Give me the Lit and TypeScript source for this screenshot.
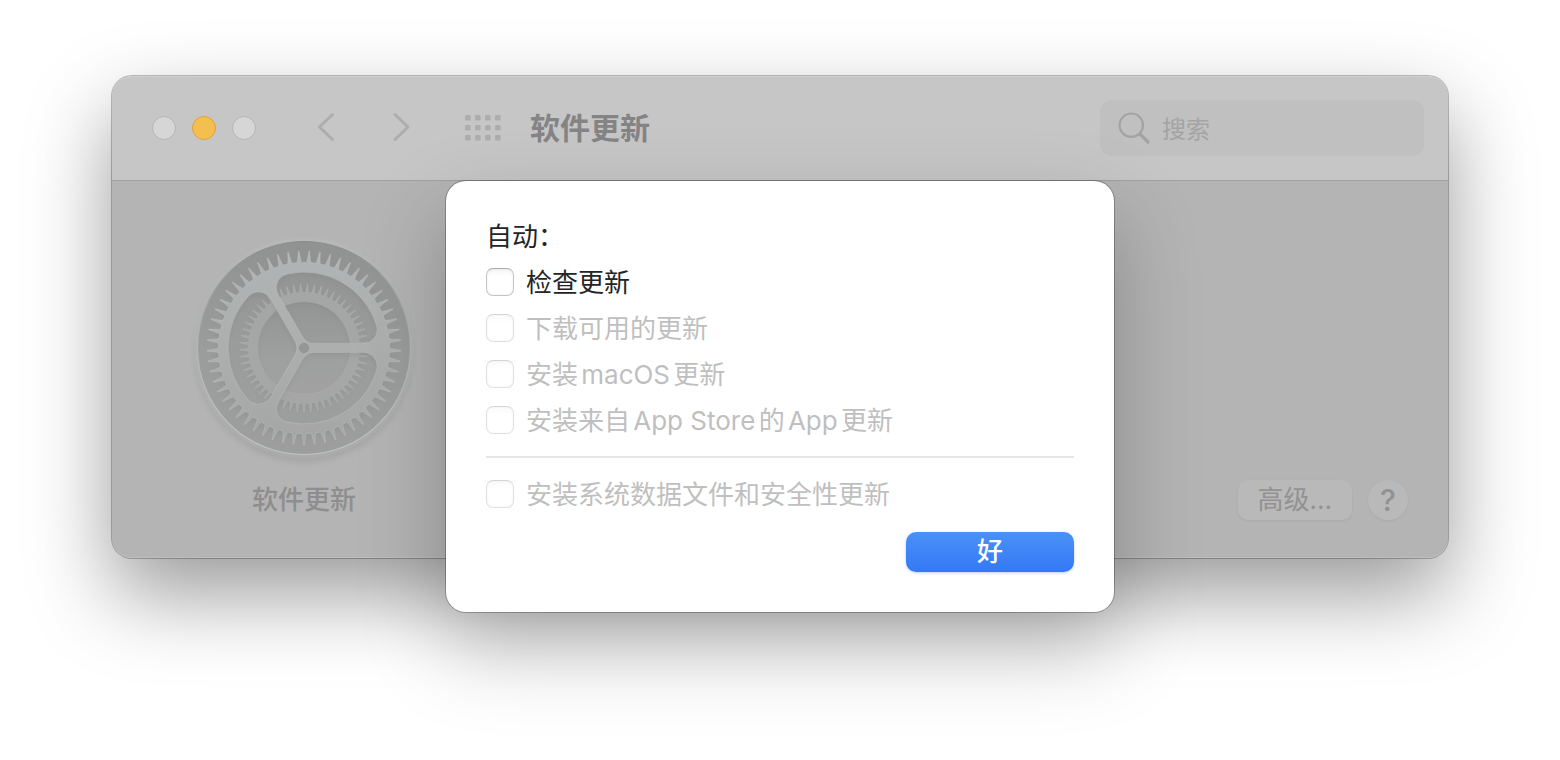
import { LitElement, html, svg, css } from "lit";
import { customElement, property, state } from "lit/decorators.js";
import { classMap } from "lit/directives/class-map.js";

type Point = [number, number];

const polar = (r: number, a: number): Point => [r * Math.cos(a), r * Math.sin(a)];
const fmt = ([x, y]: Point) => `${x.toFixed(2)} ${y.toFixed(2)}`;

/** Outline of a toothed ring: pointed teeth, round-bottomed gaps. */
function teethPath(count: number, root: number, tip: number, base: number, point: number): string {
  const pitch = (2 * Math.PI) / count;
  const parts: string[] = [];
  for (let i = 0; i < count; i++) {
    const a = -Math.PI / 2 + (i + 0.5) * pitch;
    const b = base / root;
    const lowLeft = fmt(polar(root, a - b));
    const lowRight = fmt(polar(root, a + b));
    const curveLeft = fmt(polar(root + 1, a - b * 0.62));
    const curveRight = fmt(polar(root + 1, a + b * 0.62));
    const tipLeft = fmt(polar(tip, a - point / tip));
    const tipRight = fmt(polar(tip, a + point / tip));
    parts.push(
      `${i === 0 ? "M" : "L"}${lowLeft} Q${curveLeft} ${tipLeft} L${tipRight} Q${curveRight} ${lowRight}`,
    );
  }
  return parts.join(" ") + " Z";
}

const circlePath = (r: number) => `M${-r} 0 a${r} ${r} 0 1 0 ${2 * r} 0 a${r} ${r} 0 1 0 ${-2 * r} 0 Z`;

/** Opening between two spokes 120 degrees apart, with rounded corners. */
function openingPath(R: number, half: number, outer: number, inner: number, turn: number): string {
  const deg = Math.PI / 180;
  const reach = R - outer;
  const off = half + outer;
  const along = Math.sqrt(reach * reach - off * off);
  const arcAngle = Math.atan2(off, along);
  const innerAlong = (half + inner) / Math.tan(60 * deg);
  const rot = ([x, y]: Point, a: number): Point => [
    x * Math.cos(a) - y * Math.sin(a),
    x * Math.sin(a) + y * Math.cos(a),
  ];
  const mirror = ([x, y]: Point): Point => rot([x, -y], 120 * deg);
  const at = (p: Point) => fmt(rot(p, turn * deg));
  const a: Point = [innerAlong, half];
  const b: Point = [along, half];
  const c: Point = polar(R, arcAngle);
  return [
    `M${at(a)}`,
    `L${at(b)}`,
    `A${outer} ${outer} 0 0 1 ${at(c)}`,
    `A${R} ${R} 0 0 1 ${at(mirror(c))}`,
    `A${outer} ${outer} 0 0 1 ${at(mirror(b))}`,
    `L${at(mirror(a))}`,
    `A${inner} ${inner} 0 0 1 ${at(a)}`,
    "Z",
  ].join(" ");
}

const OUTER_GEAR =
  teethPath(57, 85.5, 97, 2.4, 0.3) +
  [0, 120, 240].map((t) => openingPath(76, 4.3, 14, 14, t)).join(" ") +
  circlePath(4.7);
const INNER_GEAR = teethPath(57, 55.5, 64, 1.6, 0.2) + circlePath(46.5);

@customElement("gear-emblem")
export class GearEmblem extends LitElement {
  static styles = css`
    :host {
      display: block;
    }
    .emblem {
      display: block;
      width: 226px;
      height: 226px;
      overflow: visible;
    }
  `;

  render() {
    return html`<svg class="emblem" viewBox="-113 -113 226 226" aria-hidden="true">
      ${svg`
        <defs>
          <linearGradient id="plate" x1="0" y1="0" x2="0" y2="1">
            <stop offset="0" stop-color="#8f9291"></stop>
            <stop offset="0.5" stop-color="#9b9d9d"></stop>
            <stop offset="1" stop-color="#9e9e9e"></stop>
          </linearGradient>
          <linearGradient id="metal" x1="0" y1="0" x2="0" y2="1">
            <stop offset="0" stop-color="#b1b4b4"></stop>
            <stop offset="0.5" stop-color="#acafae"></stop>
            <stop offset="1" stop-color="#a5a5a5"></stop>
          </linearGradient>
          <linearGradient id="metal2" x1="0" y1="0" x2="0" y2="1">
            <stop offset="0" stop-color="#a4a7a6"></stop>
            <stop offset="1" stop-color="#a6a6a6"></stop>
          </linearGradient>
          <linearGradient id="well" x1="0" y1="0" x2="0" y2="1">
            <stop offset="0" stop-color="#929594"></stop>
            <stop offset="0.6" stop-color="#9e9f9f"></stop>
            <stop offset="1" stop-color="#a2a2a2"></stop>
          </linearGradient>
          <linearGradient id="rim" x1="0" y1="0" x2="0" y2="1">
            <stop offset="0" stop-color="#8a8c8b"></stop>
            <stop offset="0.45" stop-color="#b4b6b5"></stop>
            <stop offset="1" stop-color="#c1c3c2"></stop>
          </linearGradient>
          <linearGradient id="bezel" x1="0" y1="0" x2="0" y2="1">
            <stop offset="0" stop-color="#b6b8b7"></stop>
            <stop offset="1" stop-color="#aaabab"></stop>
          </linearGradient>
          <filter id="soft" x="-20%" y="-20%" width="140%" height="140%">
            <feGaussianBlur stdDeviation="3"></feGaussianBlur>
          </filter>
          <filter id="cast" x="-20%" y="-20%" width="140%" height="140%">
            <feGaussianBlur stdDeviation="2.5"></feGaussianBlur>
          </filter>
        </defs>
        <circle cy="5" r="109" fill="#8e8e8e" opacity="0.4" filter="url(#soft)"></circle>
        <circle r="110.5" fill="url(#bezel)"></circle>
        <circle r="106.5" fill="url(#plate)" stroke="url(#rim)" stroke-width="1.2"></circle>
        <circle r="47" fill="url(#well)"></circle>
        <path d=${INNER_GEAR} fill="#808282" fill-rule="evenodd" opacity="0.25" transform="translate(0 3)" filter="url(#cast)"></path>
        <path d=${INNER_GEAR} fill="url(#metal2)" fill-rule="evenodd" stroke="#b2b4b4" stroke-width="0.4"></path>
        <path d=${OUTER_GEAR} fill="#808282" fill-rule="evenodd" opacity="0.25" transform="translate(0 4)" filter="url(#cast)"></path>
        <path d=${OUTER_GEAR} fill="url(#metal)" fill-rule="evenodd" stroke="#babdbc" stroke-width="0.6"></path>
        <circle r="4.7" fill="#959797" stroke="#8d9090" stroke-width="0.8"></circle>
      `}
    </svg>`;
  }
}

@customElement("check-row")
export class CheckRow extends LitElement {
  @property() label = "";
  @property({ type: Boolean }) disabled = false;

  static styles = css`
    :host {
      display: block;
    }
    .row {
      display: flex;
      align-items: center;
      gap: 12px;
      height: 46px;
      font-size: 26px;
      line-height: 44px;
      color: #242424;
      text-autospace: normal;
      white-space: nowrap;
    }
    .row.off {
      color: #bfbfbf;
    }
    .text {
      padding-top: 2px;
    }
    .box {
      appearance: none;
      flex: none;
      width: 28px;
      height: 28px;
      margin: 0;
      border: 1px solid #c4c4c4;
      border-top-color: #acacac;
      border-radius: 7px;
      background: linear-gradient(#f5f5f5, #ffffff 30%);
      box-shadow: inset 0 0 3px rgba(0, 0, 0, 0.08);
    }
    .box:disabled {
      border-color: #e0e0e0;
      border-top-color: #d5d5d5;
      background: linear-gradient(#fafafa, #ffffff 30%);
      box-shadow: inset 0 0 3px rgba(0, 0, 0, 0.05);
    }
    .box:checked {
      background: #3478f6;
    }
  `;

  render() {
    return html`<label class=${classMap({ row: true, off: this.disabled })}>
      <input class="box" type="checkbox" ?disabled=${this.disabled} />
      <span class="text">${this.label}</span>
    </label>`;
  }
}

@customElement("app-root")
export class AppRoot extends LitElement {
  @state() private options = [
    { label: "检查更新", disabled: false },
    { label: "下载可用的更新", disabled: true },
    { label: "安装macOS更新", disabled: true },
    { label: "安装来自App Store的App更新", disabled: true },
  ];

  static styles = css`
    :host {
      display: block;
      box-sizing: border-box;
      min-height: 100vh;
      padding: 76px 112px;
      background: #ffffff;
      font-family: Inter, "Noto Sans CJK SC", sans-serif;
    }
    button {
      font: inherit;
      padding: 0;
      border: 0;
      background: none;
    }
    .window {
      position: relative;
      border-radius: 20px;
      background: #b4b4b4;
      box-shadow:
        0 0 0 1px rgba(0, 0, 0, 0.25),
        0 36px 84px rgba(0, 0, 0, 0.4);
    }
    .toolbar {
      display: flex;
      align-items: center;
      height: 104px;
      padding: 0 24px 0 40px;
      border-bottom: 1px solid #a0a0a0;
      border-radius: 20px 20px 0 0;
      background: #c6c6c6;
      box-shadow: inset 0 1px 0 #d0d0d0;
    }
    .lights {
      display: flex;
      gap: 16px;
    }
    .light {
      width: 24px;
      height: 24px;
      border: 1px solid #b6b6b6;
      border-radius: 50%;
      background: #d6d6d6;
    }
    .light.amber {
      border-color: #dfa23c;
      background: #f5bf4f;
    }
    .arrows {
      display: flex;
      gap: 48px;
      margin-left: 60px;
    }
    .glyph {
      display: block;
      fill: none;
      stroke: #adadad;
      stroke-width: 3;
      stroke-linecap: round;
      stroke-linejoin: round;
    }
    .grid {
      margin-left: 53px;
    }
    .dots {
      display: block;
      fill: #adadad;
    }
    .title {
      flex: 1;
      margin: 0 0 0 29px;
      font-size: 30px;
      line-height: 44px;
      font-weight: 700;
      color: #848484;
    }
    .search {
      display: flex;
      align-items: center;
      gap: 11px;
      box-sizing: border-box;
      width: 324px;
      height: 56px;
      padding: 0 16px 0 17px;
      border-radius: 12px;
      background: #c0c0c0;
    }
    .lens {
      flex: none;
      fill: none;
      stroke: #a3a3a3;
      stroke-linecap: round;
    }
    .field {
      flex: 1;
      min-width: 0;
      height: 40px;
      padding: 2px 0 0;
      border: 0;
      outline: 0;
      background: none;
      font: inherit;
      font-size: 24px;
      color: #828282;
    }
    .field::placeholder {
      color: #a4a4a4;
      opacity: 1;
    }
    .content {
      display: flex;
      justify-content: space-between;
      align-items: flex-end;
      padding: 54px 40px 36px 79px;
      border-radius: 0 0 20px 20px;
      box-shadow: inset 0 -1px 0 #bfbfbf;
    }
    .product {
      display: flex;
      flex-direction: column;
      align-items: center;
      gap: 17px;
    }
    .name {
      margin: 0;
      font-size: 26px;
      line-height: 44px;
      font-weight: 500;
      color: #8e8e8e;
    }
    .actions {
      display: flex;
      gap: 16px;
      padding-bottom: 2px;
    }
    .soft {
      display: flex;
      align-items: center;
      justify-content: center;
      height: 40px;
      padding: 0 20px;
      border-radius: 10px;
      background: #b9b9b9;
      box-shadow: 0 1px 3px rgba(0, 0, 0, 0.06);
      font-size: 26px;
      line-height: 40px;
      color: #929292;
    }
    .soft.round {
      width: 40px;
      padding: 0;
      border-radius: 50%;
      font-size: 30px;
      font-weight: 500;
    }
    .overlay {
      position: absolute;
      top: 105px;
      left: 0;
      right: 0;
      display: flex;
      justify-content: center;
    }
    .sheet {
      box-sizing: border-box;
      width: 50%;
      min-width: 480px;
      padding: 32px 40px 40px;
      border-radius: 20px;
      background: #ffffff;
      box-shadow:
        0 0 0 1px rgba(0, 0, 0, 0.25),
        0 36px 84px rgba(0, 0, 0, 0.25);
    }
    .group {
      margin: 0;
      padding: 0;
      border: 0;
      min-width: 0;
    }
    .heading {
      display: block;
      box-sizing: border-box;
      height: 46px;
      padding: 2px 0 0;
      font-size: 26px;
      line-height: 44px;
      color: #242424;
    }
    .rule {
      height: 2px;
      margin: 13px 0;
      border: 0;
      background: #e5e5e5;
    }
    .footer {
      display: flex;
      justify-content: flex-end;
      margin-top: 15px;
    }
    .ok {
      width: 168px;
      height: 40px;
      border-radius: 10px;
      background: linear-gradient(#4b91f7, #3478f6);
      box-shadow: 0 1px 3px rgba(52, 120, 246, 0.35);
      font-size: 26px;
      line-height: 38px;
      font-weight: 500;
      color: #ffffff;
    }
  `;

  render() {
    return html`
      <main class="window">
        <header class="toolbar">
          <div class="lights">
            <button class="light" aria-label="关闭"></button>
            <button class="light amber" aria-label="最小化"></button>
            <button class="light" aria-label="缩放"></button>
          </div>
          <nav class="arrows">
            <button aria-label="后退">
              <svg class="glyph" width="24" height="32" viewBox="0 0 24 32"><path d="M16.5 2.5 L3.5 15 L16.5 27.5"></path></svg>
            </button>
            <button aria-label="前进">
              <svg class="glyph" width="24" height="32" viewBox="0 0 24 32"><path d="M7 2.5 L20 15 L7 27.5"></path></svg>
            </button>
          </nav>
          <button class="grid" aria-label="显示全部">
            <svg class="dots" width="36" height="26" viewBox="0 0 36 26">
              ${[0, 10, 20].map((y) =>
                [0, 10, 20, 30].map((x) => svg`<rect x=${x} y=${y} width="5.6" height="5.6" rx="1.2"></rect>`),
              )}
            </svg>
          </button>
          <h1 class="title">软件更新</h1>
          <label class="search">
            <svg class="lens" width="34" height="34" viewBox="0 0 34 34" aria-hidden="true">
              <circle cx="14.3" cy="14.2" r="11.7" stroke-width="2.2"></circle>
              <path d="M23 23 L31 31" stroke-width="3.2"></path>
            </svg>
            <input class="field" type="text" placeholder="搜索" aria-label="搜索" />
          </label>
        </header>

        <section class="content">
          <div class="product">
            <gear-emblem></gear-emblem>
            <p class="name">软件更新</p>
          </div>
          <div class="actions">
            <button class="soft">高级...</button>
            <button class="soft round" aria-label="帮助">?</button>
          </div>
        </section>

        <div class="overlay">
          <form class="sheet" role="dialog" aria-label="自动" @submit=${(e: Event) => e.preventDefault()}>
            <fieldset class="group">
              <legend class="heading">自动：</legend>
              ${this.options.map(
                (o) => html`<check-row .label=${o.label} .disabled=${o.disabled}></check-row>`,
              )}
              <hr class="rule" />
              <check-row label="安装系统数据文件和安全性更新" disabled></check-row>
            </fieldset>
            <div class="footer">
              <button class="ok" type="submit">好</button>
            </div>
          </form>
        </div>
      </main>
    `;
  }
}
